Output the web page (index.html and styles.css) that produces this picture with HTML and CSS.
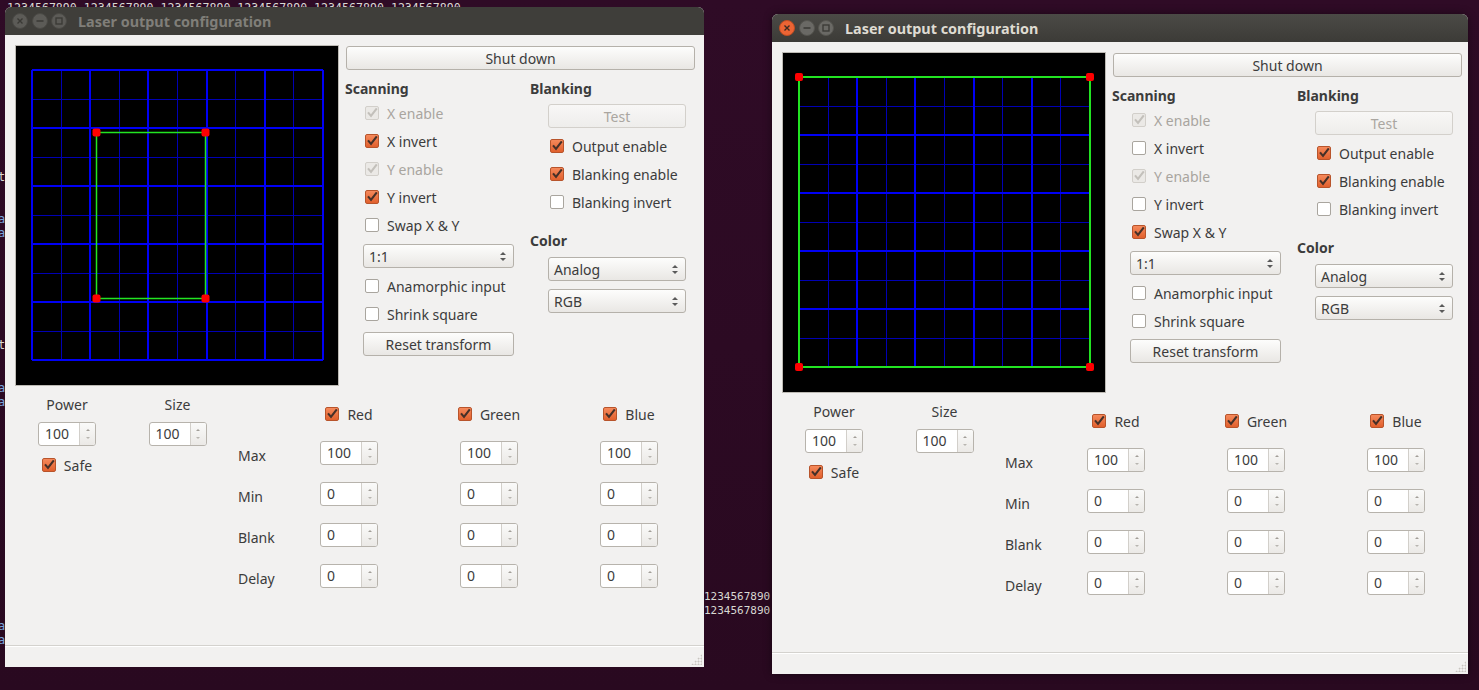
FILE: index.html
```html
<!DOCTYPE html>
<html>
<head>
<meta charset="utf-8">
<title>Laser output configuration</title>
<link rel="stylesheet" href="styles.css">
</head>
<body>
<div class="term term-top"><span>1234567890 1234567890 1234567890 1234567890 1234567890 1234567890</span></div>
<div class="term edge t1">t</div>
<div class="term edge a a1">a</div>
<div class="term edge a a2">a</div>
<div class="term edge t2">t</div>
<div class="term edge a a3">a</div>
<div class="term edge a a4">a</div>
<div class="term edge a a5">a</div>
<div class="term edge a a6">a</div>
<div class="term mid m1">1234567890</div>
<div class="term mid m2">1234567890</div>

<div class="window w1">
  <div class="titlebar">
    <div class="tb-buttons">
      <span class="tbb"><svg viewBox="0 0 16 16"><circle cx="8" cy="8" r="7.5"/><path d="M5.5 5.5L10.5 10.5M10.5 5.5L5.5 10.5"/></svg></span>
      <span class="tbb"><svg viewBox="0 0 16 16"><circle cx="8" cy="8" r="7.5"/><path d="M4.5 8H11.5"/></svg></span>
      <span class="tbb"><svg viewBox="0 0 16 16"><circle cx="8" cy="8" r="7.5"/><rect x="5" y="5" width="6" height="6"/></svg></span>
    </div>
    <div class="title">Laser output configuration</div>
  </div>
  <div class="content">
    <div class="top">
      <div class="scope">
        <svg width="322" height="339" viewBox="0 0 322 339">
          <path class="minor" d="M45.5 24V314M103.5 24V314M161.5 24V314M219.5 24V314M277.5 24V314M16 53.5H307M16 111.5H307M16 169.5H307M16 227.5H307M16 285.5H307"/>
          <path class="major" d="M16 24V314M74 24V314M132 24V314M191 24V314M249 24V314M307 24V314M16 24H307M16 82H307M16 140H307M16 198H307M16 256H307M16 314H307"/>
          <path class="shape" d="M80.5 86.5H189.5V252.5H80.5Z"/>
          <rect class="dot" x="76.5" y="82.5" width="8" height="8" rx="2"/>
          <rect class="dot" x="185.5" y="82.5" width="8" height="8" rx="2"/>
          <rect class="dot" x="76.5" y="248.5" width="8" height="8" rx="2"/>
          <rect class="dot" x="185.5" y="248.5" width="8" height="8" rx="2"/>
        </svg>
      </div>
      <div class="panel">
        <div class="btn shut">Shut down</div>
        <div class="cols">
          <div class="col scan">
            <div class="heading">Scanning</div>
            <div class="cb dis first"><span class="box on"></span>X enable</div>
            <div class="cb"><span class="box on"></span>X invert</div>
            <div class="cb dis"><span class="box on"></span>Y enable</div>
            <div class="cb"><span class="box on"></span>Y invert</div>
            <div class="cb"><span class="box"></span>Swap X &amp; Y</div>
            <div class="combo ratio"><span>1:1</span><i class="arrows"></i></div>
            <div class="cb after-combo"><span class="box"></span>Anamorphic input</div>
            <div class="cb"><span class="box"></span>Shrink square</div>
            <div class="btn reset">Reset transform</div>
          </div>
          <div class="col blank">
            <div class="heading">Blanking</div>
            <div class="btn test disabled">Test</div>
            <div class="cb first-b"><span class="box on"></span>Output enable</div>
            <div class="cb"><span class="box on"></span>Blanking enable</div>
            <div class="cb"><span class="box"></span>Blanking invert</div>
            <div class="heading color-h">Color</div>
            <div class="combo c1"><span>Analog</span><i class="arrows"></i></div>
            <div class="combo c2"><span>RGB</span><i class="arrows"></i></div>
          </div>
        </div>
      </div>
    </div>
    <div class="bottom">
      <div class="ps">
        <div class="lbl">Power</div>
        <div class="lbl">Size</div>
        <div class="spin"><span class="val">100</span><span class="arr"><i class="up"></i><i class="dn"></i></span></div>
        <div class="spin"><span class="val">100</span><span class="arr"><i class="up"></i><i class="dn"></i></span></div>
        <div class="cb safe"><span class="box on"></span>Safe</div>
      </div>
      <div class="chan">
        <div></div>
        <div class="cb hdr"><span class="box on"></span>Red</div>
        <div class="cb hdr"><span class="box on"></span>Green</div>
        <div class="cb hdr"><span class="box on"></span>Blue</div>
        <div class="rl">Max</div>
        <div class="spin"><span class="val">100</span><span class="arr"><i class="up"></i><i class="dn"></i></span></div>
        <div class="spin"><span class="val">100</span><span class="arr"><i class="up"></i><i class="dn"></i></span></div>
        <div class="spin"><span class="val">100</span><span class="arr"><i class="up"></i><i class="dn"></i></span></div>
        <div class="rl">Min</div>
        <div class="spin"><span class="val">0</span><span class="arr"><i class="up"></i><i class="dn"></i></span></div>
        <div class="spin"><span class="val">0</span><span class="arr"><i class="up"></i><i class="dn"></i></span></div>
        <div class="spin"><span class="val">0</span><span class="arr"><i class="up"></i><i class="dn"></i></span></div>
        <div class="rl">Blank</div>
        <div class="spin"><span class="val">0</span><span class="arr"><i class="up"></i><i class="dn"></i></span></div>
        <div class="spin"><span class="val">0</span><span class="arr"><i class="up"></i><i class="dn"></i></span></div>
        <div class="spin"><span class="val">0</span><span class="arr"><i class="up"></i><i class="dn"></i></span></div>
        <div class="rl">Delay</div>
        <div class="spin"><span class="val">0</span><span class="arr"><i class="up"></i><i class="dn"></i></span></div>
        <div class="spin"><span class="val">0</span><span class="arr"><i class="up"></i><i class="dn"></i></span></div>
        <div class="spin"><span class="val">0</span><span class="arr"><i class="up"></i><i class="dn"></i></span></div>
      </div>
    </div>
  </div>
  <div class="status"><i class="grip"></i></div>
</div>

<div class="window w2">
  <div class="titlebar">
    <div class="tb-buttons">
      <span class="tbb close"><svg viewBox="0 0 16 16"><circle cx="8" cy="8" r="7.5"/><path d="M5.5 5.5L10.5 10.5M10.5 5.5L5.5 10.5"/></svg></span>
      <span class="tbb"><svg viewBox="0 0 16 16"><circle cx="8" cy="8" r="7.5"/><path d="M4.5 8H11.5"/></svg></span>
      <span class="tbb"><svg viewBox="0 0 16 16"><circle cx="8" cy="8" r="7.5"/><rect x="5" y="5" width="6" height="6"/></svg></span>
    </div>
    <div class="title">Laser output configuration</div>
  </div>
  <div class="content">
    <div class="top">
      <div class="scope">
        <svg width="322" height="339" viewBox="0 0 322 339">
          <path class="minor" d="M45.5 24V314M103.5 24V314M161.5 24V314M219.5 24V314M277.5 24V314M16 53.5H307M16 111.5H307M16 169.5H307M16 227.5H307M16 285.5H307"/>
          <path class="major" d="M16 24V314M74 24V314M132 24V314M191 24V314M249 24V314M307 24V314M16 24H307M16 82H307M16 140H307M16 198H307M16 256H307M16 314H307"/>
          <path class="shape full" d="M16 24H307V314H16Z"/>
          <rect class="dot" x="12" y="20" width="8" height="8" rx="2"/>
          <rect class="dot" x="303" y="20" width="8" height="8" rx="2"/>
          <rect class="dot" x="12" y="310" width="8" height="8" rx="2"/>
          <rect class="dot" x="303" y="310" width="8" height="8" rx="2"/>
        </svg>
      </div>
      <div class="panel">
        <div class="btn shut">Shut down</div>
        <div class="cols">
          <div class="col scan">
            <div class="heading">Scanning</div>
            <div class="cb dis first"><span class="box on"></span>X enable</div>
            <div class="cb"><span class="box"></span>X invert</div>
            <div class="cb dis"><span class="box on"></span>Y enable</div>
            <div class="cb"><span class="box"></span>Y invert</div>
            <div class="cb"><span class="box on"></span>Swap X &amp; Y</div>
            <div class="combo ratio"><span>1:1</span><i class="arrows"></i></div>
            <div class="cb after-combo"><span class="box"></span>Anamorphic input</div>
            <div class="cb"><span class="box"></span>Shrink square</div>
            <div class="btn reset">Reset transform</div>
          </div>
          <div class="col blank">
            <div class="heading">Blanking</div>
            <div class="btn test disabled">Test</div>
            <div class="cb first-b"><span class="box on"></span>Output enable</div>
            <div class="cb"><span class="box on"></span>Blanking enable</div>
            <div class="cb"><span class="box"></span>Blanking invert</div>
            <div class="heading color-h">Color</div>
            <div class="combo c1"><span>Analog</span><i class="arrows"></i></div>
            <div class="combo c2"><span>RGB</span><i class="arrows"></i></div>
          </div>
        </div>
      </div>
    </div>
    <div class="bottom">
      <div class="ps">
        <div class="lbl">Power</div>
        <div class="lbl">Size</div>
        <div class="spin"><span class="val">100</span><span class="arr"><i class="up"></i><i class="dn"></i></span></div>
        <div class="spin"><span class="val">100</span><span class="arr"><i class="up"></i><i class="dn"></i></span></div>
        <div class="cb safe"><span class="box on"></span>Safe</div>
      </div>
      <div class="chan">
        <div></div>
        <div class="cb hdr"><span class="box on"></span>Red</div>
        <div class="cb hdr"><span class="box on"></span>Green</div>
        <div class="cb hdr"><span class="box on"></span>Blue</div>
        <div class="rl">Max</div>
        <div class="spin"><span class="val">100</span><span class="arr"><i class="up"></i><i class="dn"></i></span></div>
        <div class="spin"><span class="val">100</span><span class="arr"><i class="up"></i><i class="dn"></i></span></div>
        <div class="spin"><span class="val">100</span><span class="arr"><i class="up"></i><i class="dn"></i></span></div>
        <div class="rl">Min</div>
        <div class="spin"><span class="val">0</span><span class="arr"><i class="up"></i><i class="dn"></i></span></div>
        <div class="spin"><span class="val">0</span><span class="arr"><i class="up"></i><i class="dn"></i></span></div>
        <div class="spin"><span class="val">0</span><span class="arr"><i class="up"></i><i class="dn"></i></span></div>
        <div class="rl">Blank</div>
        <div class="spin"><span class="val">0</span><span class="arr"><i class="up"></i><i class="dn"></i></span></div>
        <div class="spin"><span class="val">0</span><span class="arr"><i class="up"></i><i class="dn"></i></span></div>
        <div class="spin"><span class="val">0</span><span class="arr"><i class="up"></i><i class="dn"></i></span></div>
        <div class="rl">Delay</div>
        <div class="spin"><span class="val">0</span><span class="arr"><i class="up"></i><i class="dn"></i></span></div>
        <div class="spin"><span class="val">0</span><span class="arr"><i class="up"></i><i class="dn"></i></span></div>
        <div class="spin"><span class="val">0</span><span class="arr"><i class="up"></i><i class="dn"></i></span></div>
      </div>
    </div>
  </div>
  <div class="status"><i class="grip"></i></div>
</div>
</body>
</html>
```

FILE: styles.css
```css
* { box-sizing: border-box; }
html, body { margin: 0; padding: 0; }
body {
  width: 1479px;
  height: 690px;
  overflow: hidden;
  position: relative;
  background: linear-gradient(#2f0b26, #290920);
  font-family: "Noto Sans", "Open Sans", sans-serif;
  font-size: 14px;
  color: #3c3c3c;
}

/* terminal text behind the windows (only the uncovered slivers) */
.term {
  position: absolute;
  font-family: "DejaVu Sans Mono", monospace;
  white-space: pre;
  color: #d8d8d2;
  font-size: 11px;
  line-height: 14px;
}
.term-top {
  left: 7px;
  top: 0;
  width: 470px;
  height: 7px;
  overflow: hidden;
  font-size: 11.6px;
}
.term-top span { display: block; margin-top: 1px; }
.edge { left: -2px; width: 7px; overflow: hidden; font-size: 12px; }
.edge.a { color: #7aa3d8; }
.t1 { top: 170px; }
.a1 { top: 212px; }
.a2 { top: 226px; }
.t2 { top: 338px; }
.a3 { top: 381px; }
.a4 { top: 395px; }
.a5 { top: 619px; }
.a6 { top: 633px; }
.mid { left: 704px; }
.m1 { top: 590px; }
.m2 { top: 604px; }

/* windows */
.window {
  position: absolute;
  height: 660px;
  background: #f2f1f0;
  border-radius: 6px 6px 0 0;
  overflow: hidden;
  display: flex;
  flex-direction: column;
}
.w1 { left: 5px; top: 7px; width: 699px; z-index: 1; }
.w2 { left: 772px; top: 14px; width: 696px; z-index: 2; box-shadow: 0 0 8px rgba(0,0,0,0.45); }

.titlebar {
  height: 28px;
  flex: none;
  display: flex;
  align-items: center;
  padding-left: 7px;
  background: #3f3e3a;
}
.w2 .titlebar { background: linear-gradient(#4b4a46, #3c3b37); }
.tb-buttons { display: flex; gap: 3.5px; }
.tbb { width: 16px; height: 16px; display: block; }
.tbb svg { width: 16px; height: 16px; display: block; }
.tbb circle { fill: #5c5b57; stroke: #4a4945; stroke-width: 1; }
.tbb path { stroke: #3a3935; stroke-width: 1.4; fill: none; }
.tbb rect { stroke: #3a3935; stroke-width: 1.3; fill: none; }
.w2 .tbb circle { fill: #6a6965; stroke: #55544f; }
.w2 .tbb.close circle { fill: #ec6434; stroke: #c04d22; }
.w2 .tbb.close path { stroke: #3c2a22; }
.title {
  margin-left: 11px;
  font-weight: bold;
  font-size: 14.4px;
  color: #807e79;
}
.w2 .title { color: #dfdbd2; }

.content { flex: 1; padding: 10px 0 0 10px; }
.top { display: flex; }

.scope {
  width: 324px;
  height: 341px;
  border: 1px solid #bdbab4;
  background: #000;
  flex: none;
}
.scope svg { display: block; }
.minor { stroke: #0000b4; stroke-width: 1; fill: none; }
.major { stroke: #0000f5; stroke-width: 2; fill: none; }
.shape { stroke: #22e422; stroke-width: 1.5; fill: none; }
.shape.full { stroke-width: 2; }
.dot { fill: #ff0000; }

.panel { margin-left: 7px; width: 349px; padding-top: 1px; flex: none; }

.btn {
  height: 24px;
  border: 1px solid #b5b1aa;
  border-radius: 3px;
  background: linear-gradient(#fdfdfc, #e9e7e4);
  display: flex;
  align-items: center;
  justify-content: center;
  color: #3c3c3c;
}
.btn.disabled {
  color: #aaa6a0;
  border-color: #d3d0cb;
  background: linear-gradient(#f8f7f6, #eeedeb);
}
.shut { width: 349px; }

.cols { display: grid; grid-template-columns: 184px 165px; margin-top: 9px; }
.heading { font-weight: bold; height: 20px; line-height: 20px; }
.scan .heading { margin-left: -1px; }

.cb {
  display: flex;
  align-items: center;
  gap: 8px;
  height: 28px;
  white-space: nowrap;
}
.scan .cb { padding-left: 19px; }
.blank .cb { padding-left: 20px; }
.blank .cb.first-b { margin-top: 4px; }
.cb.dis { color: #a9a59f; }

.box {
  width: 14px;
  height: 14px;
  flex: none;
  border: 1px solid #a9a59e;
  border-radius: 2px;
  background: #fff;
}
.box.on {
  border-color: #b8542b;
  background:
    url("data:image/svg+xml,%3Csvg xmlns='http://www.w3.org/2000/svg' width='12' height='12' viewBox='0 0 12 12'%3E%3Cpath d='M2 5.4L5 8.9L10.8 1.4' fill='none' stroke='%23463028' stroke-width='2.1'/%3E%3C/svg%3E") center / 12px 12px no-repeat,
    linear-gradient(#f5895b, #e1602d);
}
.cb.dis .box.on {
  border-color: #d2cfca;
  background:
    url("data:image/svg+xml,%3Csvg xmlns='http://www.w3.org/2000/svg' width='12' height='12' viewBox='0 0 12 12'%3E%3Cpath d='M2 5.4L5 8.9L10.8 1.4' fill='none' stroke='%23c3c0bb' stroke-width='2.1'/%3E%3C/svg%3E") center / 12px 12px no-repeat,
    #ebe9e6;
}

.combo {
  height: 24px;
  border: 1px solid #b5b1aa;
  border-radius: 3px;
  background: linear-gradient(#fdfdfc, #e9e7e4);
  display: flex;
  align-items: center;
  justify-content: space-between;
  padding: 0 7px 0 5px;
}
.arrows { display: flex; flex-direction: column; gap: 3px; }
.arrows::before, .arrows::after {
  content: "";
  display: block;
  border-left: 3px solid transparent;
  border-right: 3px solid transparent;
}
.arrows::before { border-bottom: 3px solid #5a5a5a; }
.arrows::after { border-top: 3px solid #5a5a5a; }

.ratio { margin: 5px 0 0 17px; width: 151px; }
.scan .cb.after-combo { margin-top: 4px; }
.reset { margin: 4px 0 0 17px; width: 151px; }

.test { margin: 5px 0 0 18px; width: 138px; }
.color-h { margin-top: 15px; }
.c1 { margin: 6px 0 0 18px; width: 138px; }
.c2 { margin: 8px 0 0 18px; width: 138px; }

/* bottom area */
.bottom { display: flex; align-items: flex-start; margin-top: 10px; }
.ps {
  display: grid;
  grid-template-columns: 104px 117px;
  grid-template-rows: 18px 32px 29px;
  justify-items: center;
}
.lbl { line-height: 18px; height: 18px; }
.ps .spin { align-self: end; }
.ps .safe { height: 20px; align-self: end; }

.spin {
  width: 58px;
  height: 24px;
  border: 1px solid #b7b3ac;
  border-radius: 3px;
  display: flex;
  background: #fff;
  overflow: hidden;
}
.spin .val { flex: 1; padding-left: 6px; line-height: 22px; }
.spin .arr {
  width: 16px;
  flex: none;
  border-left: 1px solid #d2cfca;
  background: linear-gradient(#fafaf9, #ebe9e6);
  display: flex;
  flex-direction: column;
  align-items: center;
  justify-content: center;
  gap: 6px;
}
.spin .arr i { display: block; border-left: 2px solid transparent; border-right: 2px solid transparent; }
.spin .arr .up { border-bottom: 2px solid #a29e98; }
.spin .arr .dn { border-top: 2px solid #b8b5b0; }

.chan {
  display: grid;
  grid-template-columns: 41px repeat(3, 140px);
  grid-template-rows: 32px repeat(4, 41px);
  margin-left: 2px;
  margin-top: 4px;
}
.chan .hdr { justify-content: center; align-self: start; }
.chan .spin { justify-self: center; align-self: center; }
.rl { align-self: center; padding-top: 5px; }

.status {
  height: 22px;
  flex: none;
  border-top: 1px solid #d4d2ce;
  box-shadow: inset 0 1px #ffffff;
  display: flex;
  justify-content: flex-end;
  align-items: flex-end;
  padding: 0 2px 2px 0;
}
.grip {
  display: block;
  width: 11px;
  height: 11px;
  background: radial-gradient(circle, #c9c6c1 0.8px, transparent 1.2px) 0 0 / 3px 3px;
  clip-path: polygon(100% 0, 100% 100%, 0 100%);
}
```
